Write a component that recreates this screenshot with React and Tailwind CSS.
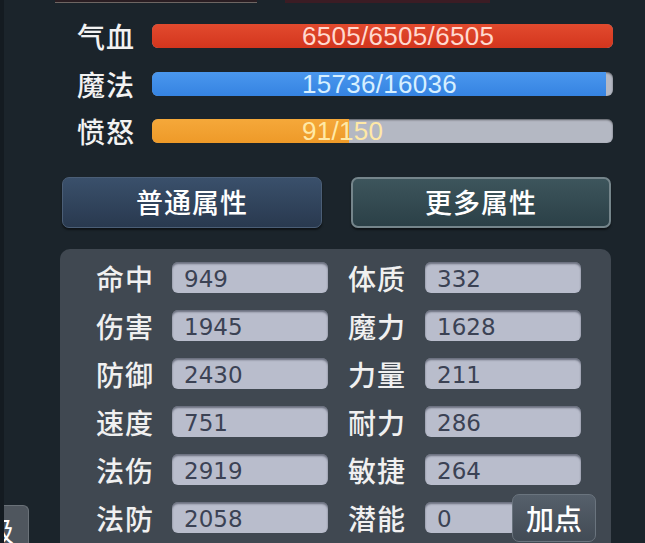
import React from "react";

const cjk = { fontFamily: '"Noto Sans CJK SC", "Noto Sans", sans-serif' };
const num = { fontFamily: '"Liberation Sans", Arial, sans-serif' };
const fld = { fontFamily: '"DejaVu Sans", "Liberation Sans", sans-serif' };

function Bar({ label, text, pct, fill, textColor }) {
  return (
    <div className="flex h-[24px] items-center">
      <div className="w-[60px] text-[28px] leading-none text-[#f2f2f2] font-medium tracking-[1px]" style={cjk}>
        {label}
      </div>
      <div className="ml-[15px] h-[24px] w-[461px] relative">
        <div className="absolute inset-0 rounded-[6px] bg-[#b4b8c3] overflow-hidden shadow-[inset_0_1px_2px_rgba(0,0,0,0.5)]">
          <div className={`h-full ${fill}`} style={{ width: pct + "%" }} />
        </div>
        <div
          className={`relative pl-[150px] text-[26px] leading-[24px] tracking-[0.3px] ${textColor}`}
          style={num}
        >
          {text}
        </div>
      </div>
    </div>
  );
}

function Field({ value, w = "w-[156px]" }) {
  return (
    <div className={`${w} h-[31px] rounded-[6px] bg-[#b9bdcc] shadow-[inset_0_2px_2px_rgba(40,45,60,0.55)] pl-[12px] pt-[6px] text-[23px] leading-none text-[#3b4254]`} style={fld}>
      {value}
    </div>
  );
}

function Label({ children }) {
  return (
    <div className="w-[60px] text-[28px] leading-none text-[#f0f0f0] font-medium tracking-[1px]" style={cjk}>
      {children}
    </div>
  );
}

export default function App() {
  const rows = [
    ["命中", "949", "体质", "332"],
    ["伤害", "1945", "魔力", "1628"],
    ["防御", "2430", "力量", "211"],
    ["速度", "751", "耐力", "286"],
    ["法伤", "2919", "敏捷", "264"],
  ];
  return (
    <div className="relative h-[543px] w-[645px] overflow-hidden bg-[#1b242b] border-l-[4px] border-[#141b21]">
      <div className="flex h-[3px]">
        <div className="ml-[51px] w-[202px] bg-[#2a1d22] border-b border-[#6e6663]" />
        <div className="ml-[28px] w-[205px] bg-[#3b1c24]" />
      </div>

      <div className="mt-[21px] ml-[73px] flex flex-col gap-[23.5px]">
        <Bar label="气血" text="6505/6505/6505" pct={100} fill="bg-gradient-to-b from-[#e24a2e] to-[#d3351d]" textColor="text-[#ffd9cf]" />
        <Bar label="魔法" text="15736/16036" pct={98.4} fill="bg-gradient-to-b from-[#4a97ee] to-[#3583e2]" textColor="text-[#d6efff]" />
        <Bar label="愤怒" text="91/150" pct={42.7} fill="bg-gradient-to-b from-[#f5a83a] to-[#ee9a28]" textColor="text-[#ffe9a6]" />
      </div>

      <div className="mt-[34px] ml-[58px] flex gap-[29px]">
        <div className="flex h-[51px] w-[260px] items-center justify-center rounded-[7px] border border-[#4b5e76] bg-gradient-to-b from-[#3a506b] to-[#29394f] shadow-[0_2px_2px_rgba(0,0,0,0.5)] text-[27px] text-white font-medium tracking-[1px]" style={cjk}>
          普通属性
        </div>
        <div className="flex h-[51px] w-[260px] items-center justify-center rounded-[7px] border-2 border-[#75858b] bg-gradient-to-b from-[#3d555c] to-[#2b4047] shadow-[0_2px_2px_rgba(0,0,0,0.5)] text-[27px] text-white font-medium tracking-[1px]" style={cjk}>
          更多属性
        </div>
      </div>

      <div className="mt-[21px] ml-[56px] w-[551px] h-[320px] rounded-[10px] bg-[#404851] pt-[13px] pl-[36px]">
        <div className="flex flex-col gap-[17px]">
          {rows.map((r) => (
            <div key={r[0]} className="flex h-[31px] items-center">
              <Label>{r[0]}</Label>
              <div className="ml-[16px]"><Field value={r[1]} /></div>
              <div className="ml-[20px]"><Label>{r[2]}</Label></div>
              <div className="ml-[17px]"><Field value={r[3]} /></div>
            </div>
          ))}
          <div className="flex h-[31px] items-center">
            <Label>法防</Label>
            <div className="ml-[16px]"><Field value="2058" /></div>
            <div className="ml-[20px]"><Label>潜能</Label></div>
            <div className="ml-[17px]"><Field value="0" w="w-[92px]" /></div>
            <div className="-ml-[5px] flex h-[48px] w-[84px] items-center justify-center rounded-[7px] border border-[#6a747e] bg-gradient-to-b from-[#56606b] to-[#424b55] text-[28px] text-white font-medium" style={cjk}>
              加点
            </div>
          </div>
        </div>
      </div>

      <div className="absolute left-[-4px] top-[505px] h-[40px] w-[29px] overflow-hidden rounded-tr-[6px] bg-[#4f565e] border-t border-r border-[#6a7178]">
        <div className="ml-[-14px] mt-[10px] text-[28px] leading-none text-white" style={cjk}>级</div>
      </div>
    </div>
  );
}
